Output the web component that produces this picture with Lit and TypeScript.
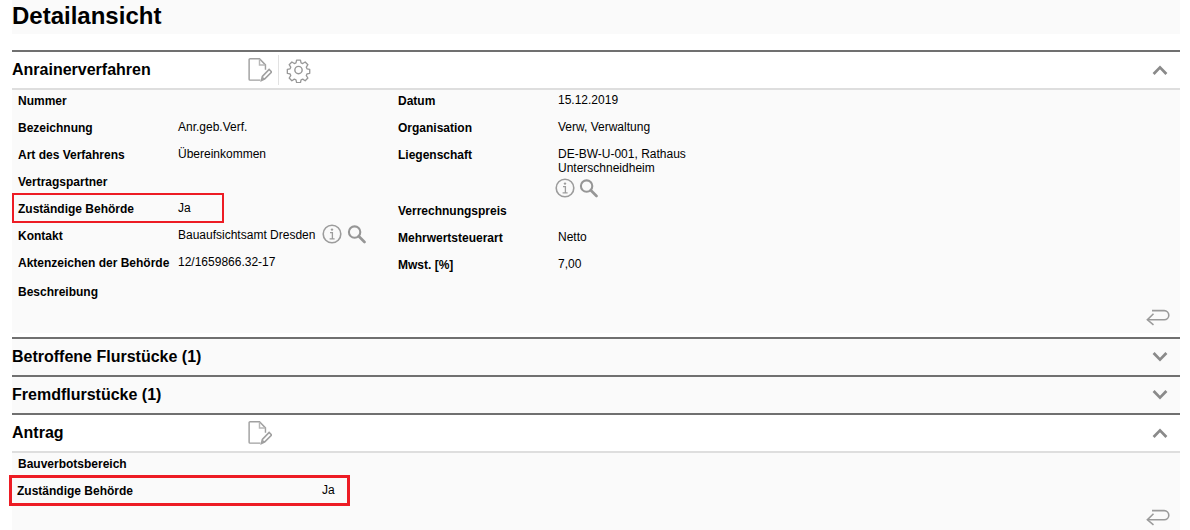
import { LitElement, html, css } from "lit";
import { customElement } from "lit/decorators.js";

const doc = html`<svg class="doc" width="25" height="26" viewBox="0 0 26 26" fill="none" stroke="#a0a0a0" stroke-width="1.5">
  <path d="M14 23.5H3.2a1 1 0 0 1-1-1V2.2a1 1 0 0 1 1-1h9.8l6.2 6.5v5"/><path d="M13 1.5v6.2h6" stroke="#b8b8b8"/>
  <path d="M15 24l1-4.4 7-7.1 2.6 2.6-7.1 7.1z" fill="#fff" stroke-width="1.7"/><path d="M15.4 23.6l1-3.6 2.5 2.6z" fill="#a0a0a0" stroke="none"/></svg>`;
const gear = html`<svg width="25" height="26" viewBox="0 0 26 26" fill="none" stroke="#989898" stroke-width="1.5" stroke-linejoin="round">
  <path d="M10.8 1.6h4.4l.7 3.2 1.9.8 2.8-1.8 3.1 3.1-1.8 2.8.8 1.9 3.1.7v4.4l-3.1.7-.8 1.9 1.8 2.8-3.1 3.1-2.8-1.8-1.9.8-.7 3.1h-4.4l-.7-3.1-1.9-.8-2.8 1.8-3.1-3.1 1.8-2.8-.8-1.9-3.1-.7v-4.4l3.1-.7.8-1.9-1.8-2.8 3.1-3.1 2.8 1.8 1.9-.8z" transform="translate(1.2 1.2) scale(.91)"/>
  <circle cx="13" cy="13" r="3.8"/></svg>`;
const info = html`<svg width="20" height="20" viewBox="0 0 20 20" fill="none" stroke="#9c9c9c"><circle cx="10" cy="10" r="8.8" stroke-width="1.6"/>
  <circle cx="10" cy="5.6" r="1.2" fill="#9c9c9c" stroke="none"/><path d="M8 8.6h2.4v6M7.6 14.8h5" stroke-width="1.3"/></svg>`;
const search = html`<svg width="19" height="20" viewBox="0 0 20 20" fill="none" stroke="#969696"><circle cx="8" cy="8" r="6" stroke-width="2.2"/><path d="M12.4 12.4l6 6" stroke-width="2.8" stroke-linecap="round"/></svg>`;
const back = html`<svg width="24" height="17" viewBox="0 0 24 17" fill="none" stroke="#9a9a9a" stroke-width="1.6"><path d="M6 1.6h12.2a4.6 4.6 0 0 1 0 9.2H1.5"/><path d="M7.5 4.8L1.4 10.8l6.1 5"/></svg>`;
const chevron = (up: boolean) => html`<svg class="chev" width="16" height="10" viewBox="0 0 16 10" fill="none" stroke="#8a8a8a" stroke-width="2.8"><path d=${up ? "M1.6 9L8 2.4 14.4 9" : "M1.6 1L8 7.6 14.4 1"} /></svg>`;

@customElement("app-root")
export class AppRoot extends LitElement {
  static styles = css`
    :host { display: block; width: 1190px; height: 530px; overflow: hidden; background: #fff; font-family: "Liberation Sans", Arial, sans-serif; color: #000; font-size: 12px; line-height: 14px; }
    .page { padding: 0 10px 0 12px; }
    h1 { margin: 0 0 16px; height: 34px; background: #fafafa; font-size: 24px; line-height: 31px; font-weight: bold; }
    .sec { border-top: 2px solid #707070; }
    .head { height: 36px; display: flex; align-items: center; position: relative; padding-right: 12px; background: #fafafa; }
    .head.open { border-bottom: 2px solid #dedede; background: #fff; }
    .head h2 { margin: 0; width: 235px; font-size: 16px; line-height: 20px; font-weight: bold; }
    .tools { display: flex; align-items: center; flex: 1; }
    .tools svg { display: block; }
    .doc { margin-left: 0; margin-right: 6px; }
    .div { width: 1px; height: 30px; background: #e2e2e2; margin-right: 7px; }
    .body { background: #fafafa; position: relative; }
    .b1 { height: 243px; margin-bottom: 4px; }
    .b2 { height: 77px; }
    .cols { display: flex; padding: 4px 0 0 6px; }
    .col { width: 380px; display: flex; flex-direction: column; }
    .row { display: flex; height: 27px; position: relative; }
    .row b { width: 160px; flex: none; font-weight: bold; }
    .row span { margin-top: -1px; }
    .tall { height: 56px; }
    .akt { height: 29px; }
    .ico { display: flex; gap: 5px; }
    .inl { margin-top: -5px; margin-left: 7px; }
    .below { margin: 3px 0 0 -3px; gap: 4px; }
    .mark { position: absolute; border: 2px solid #ed1c24; pointer-events: none; box-sizing: border-box; }
    .m1 { left: -6px; top: -9px; width: 212px; height: 30px; }
    .m2 { left: -9px; top: -9px; width: 341px; height: 31px; border-width: 3px; }
    .row.a2 b { width: 305px; margin-left: -1px; }
    .ret { position: absolute; right: 10px; bottom: 4px; display: block; }
    .b2 .ret { bottom: 1px; }
  `;

  row(l: string, v: unknown = "", cls = "", extra: unknown = "") {
    return html`<div class="row ${cls}">${extra}<b>${l}</b><span>${v}</span></div>`;
  }

  render() {
    return html`<div class="page">
      <h1>Detailansicht</h1>
      <section class="sec">
        <div class="head open"><h2>Anrainerverfahren</h2><div class="tools">${doc}<div class="div"></div>${gear}</div>${chevron(true)}</div>
        <div class="body b1">
          <div class="cols">
            <div class="col">
              ${this.row("Nummer")}
              ${this.row("Bezeichnung", "Anr.geb.Verf.")}
              ${this.row("Art des Verfahrens", "Übereinkommen")}
              ${this.row("Vertragspartner")}
              ${this.row("Zuständige Behörde", "Ja", "", html`<div class="mark m1"></div>`)}
              <div class="row"><b>Kontakt</b><span>Bauaufsichtsamt Dresden</span><div class="ico inl">${info}${search}</div></div>
              ${this.row("Aktenzeichen der Behörde", "12/1659866.32-17", "akt")}
              ${this.row("Beschreibung")}
            </div>
            <div class="col">
              ${this.row("Datum", "15.12.2019")}
              ${this.row("Organisation", "Verw, Verwaltung")}
              <div class="row tall"><b>Liegenschaft</b><span>DE-BW-U-001, Rathaus<br />Unterschneidheim<div class="ico below">${info}${search}</div></span></div>
              ${this.row("Verrechnungspreis")}
              ${this.row("Mehrwertsteuerart", "Netto")}
              ${this.row("Mwst. [%]", "7,00")}
            </div>
          </div>
          <div class="ret">${back}</div>
        </div>
      </section>
      <section class="sec"><div class="head"><h2>Betroffene Flurstücke (1)</h2><div class="tools"></div>${chevron(false)}</div></section>
      <section class="sec"><div class="head"><h2>Fremdflurstücke (1)</h2><div class="tools"></div>${chevron(false)}</div></section>
      <section class="sec">
        <div class="head open"><h2>Antrag</h2><div class="tools">${doc}</div>${chevron(true)}</div>
        <div class="body b2">
          <div class="cols"><div class="col">
            ${this.row("Bauverbotsbereich")}
            ${this.row("Zuständige Behörde", "Ja", "a2", html`<div class="mark m2"></div>`)}
          </div></div>
          <div class="ret">${back}</div>
        </div>
      </section>
    </div>`;
  }
}
